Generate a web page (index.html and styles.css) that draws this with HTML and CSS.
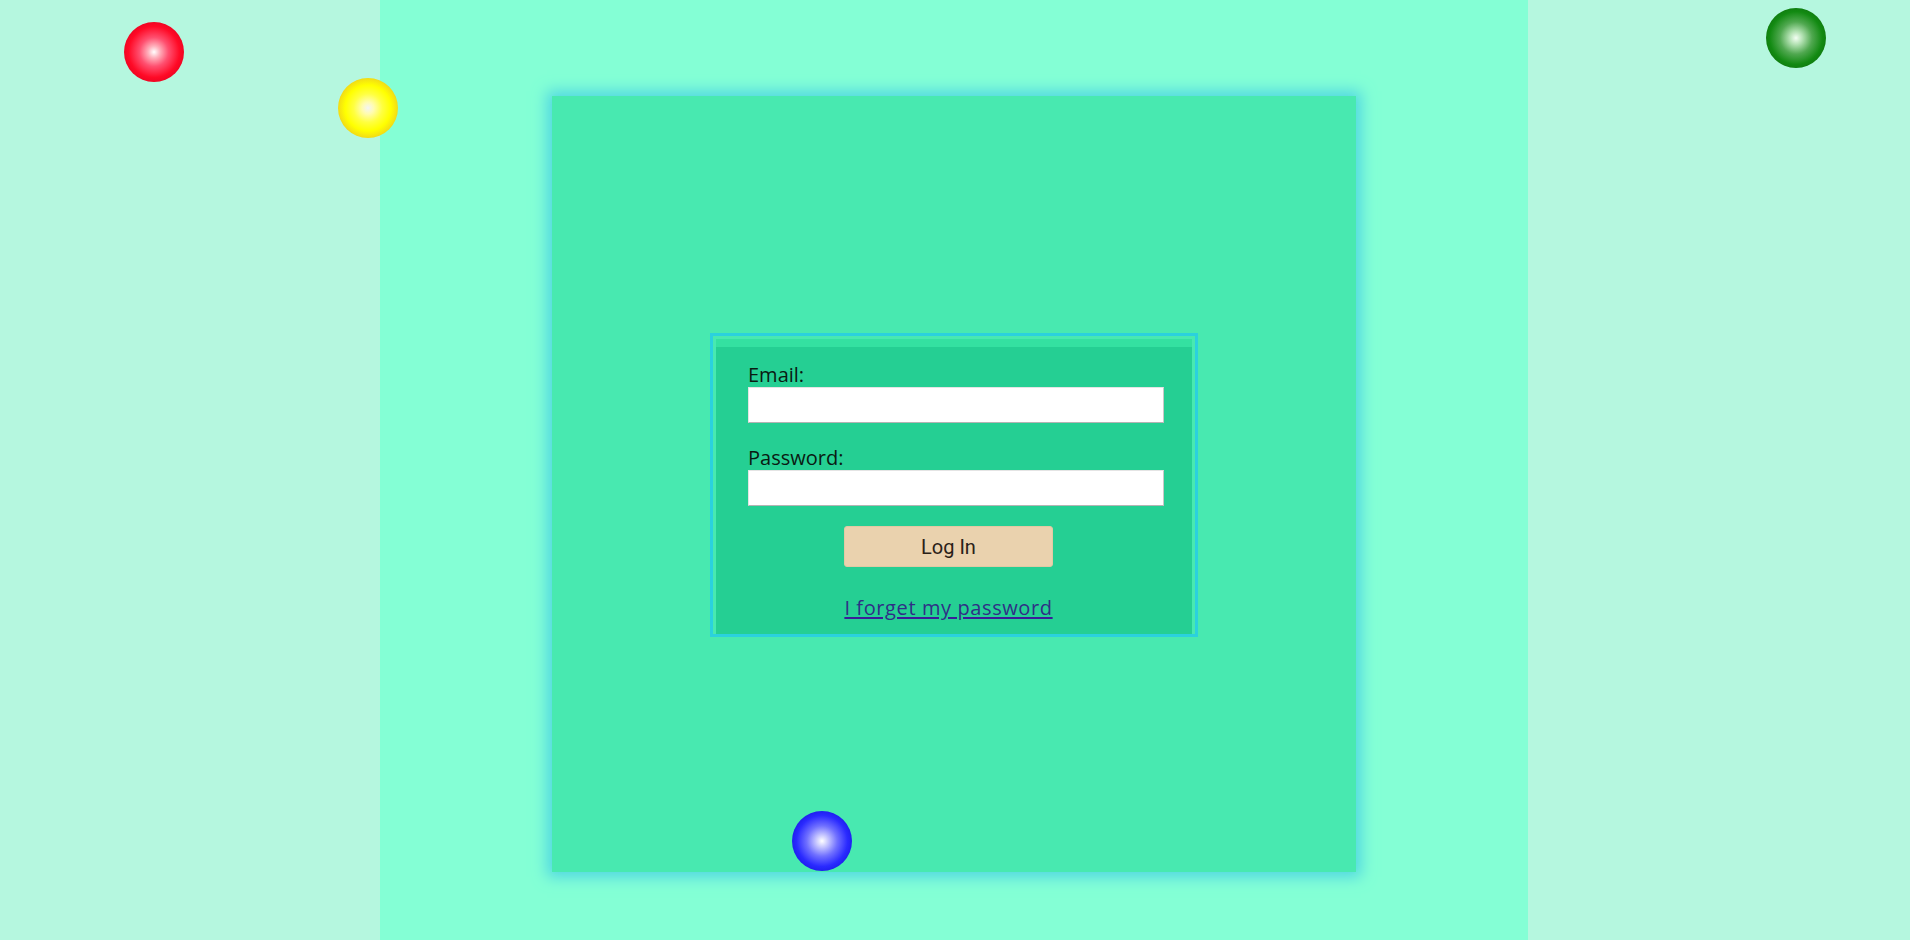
FILE: index.html
```html
<!DOCTYPE html>
<html lang="en">
<head>
<meta charset="utf-8">
<title>Log In</title>
<link rel="stylesheet" href="styles.css">
</head>
<body>
<div class="layout">
  <aside class="side side-left"></aside>
  <main class="center">
    <section class="card">
      <div class="form-frame">
        <form class="form">
          <label class="label" for="email">Email:</label>
          <input class="field" id="email" type="email">
          <label class="label label-pw" for="pw">Password:</label>
          <input class="field" id="pw" type="password">
          <div class="actions">
            <button class="btn" type="button">Log In</button>
            <a class="forgot" href="#">I forget my password</a>
          </div>
        </form>
      </div>
    </section>
  </main>
  <aside class="side side-right"></aside>
</div>
<span class="ball ball-red"></span>
<span class="ball ball-yellow"></span>
<span class="ball ball-green"></span>
<span class="ball ball-blue"></span>
</body>
</html>
```

FILE: styles.css
```css
* { box-sizing: border-box; }
html, body { margin: 0; padding: 0; }
body {
  width: 1910px;
  height: 940px;
  overflow: hidden;
  font-family: "Open Sans", "DejaVu Sans", sans-serif;
  position: relative;
}
.layout {
  display: flex;
  height: 940px;
}
.side {
  background: #b5f7df;
}
.side-left { width: 380px; }
.side-right { width: 382px; }
.center {
  width: 1148px;
  background: #84ffd5;
  display: flex;
  justify-content: center;
  align-items: flex-start;
  padding-top: 96px;
}
.card {
  width: 804px;
  height: 776px;
  background: #48e9b0;
  box-shadow: 0 0 14px 5px #4fd6e2;
  display: flex;
  justify-content: center;
  align-items: flex-start;
  padding-top: 237px;
}
.form-frame {
  width: 488px;
  border: 3px solid #2bd1dd;
  padding: 3px 3px 0 3px;
}
.form {
  background: #25cf93;
  border-top: 8px solid #34e1a1;
  padding: 16px 28px 14px 32px;
  display: flex;
  flex-direction: column;
  align-items: flex-start;
}
.label {
  font-size: 20px;
  line-height: 24px;
  color: #0a1a12;
}
.label-pw { margin-top: 23px; }
.field {
  width: 416px;
  height: 36px;
  margin: 0;
  background: #fff;
  border: 1px solid #e4e4e4;
  border-bottom-color: #b4b4b4;
  border-right-color: #c8c8c8;
}
.actions {
  width: 209px;
  margin-left: 96px;
  margin-top: 20px;
  display: flex;
  flex-direction: column;
  align-items: stretch;
}
.btn {
  height: 41px;
  background: #ead2ae;
  border: 1px solid #e2c9a3;
  border-radius: 3px;
  font-family: Roboto, "Liberation Sans", sans-serif;
  font-size: 20px;
  color: #2a2118;
  padding: 0;
}
.forgot {
  margin-top: 29px;
  text-align: center;
  font-size: 20px;
  letter-spacing: 0.6px;
  line-height: 24px;
  color: #2f2f86;
  text-decoration: underline;
  text-decoration-color: #3a1d99;
  text-underline-offset: 2px;
  white-space: nowrap;
}
.ball {
  position: absolute;
  width: 60px;
  height: 60px;
  border-radius: 50%;
}
.ball-red {
  left: 124px; top: 22px;
  background: radial-gradient(circle at center, #ffffff 0%, #ffb0bc 14%, #ff5070 34%, #ff0a26 60%, #e00020 82%, #c4001c 100%);
}
.ball-yellow {
  left: 338px; top: 78px;
  background: radial-gradient(circle at center, #f4f4f4 0%, #fffcb0 14%, #ffff40 34%, #ffff00 54%, #f0d818 72%, #d8b428 86%, #c8a038 100%);
}
.ball-green {
  left: 1766px; top: 8px;
  background: radial-gradient(circle at center, #f4fff4 0%, #b0e0b0 16%, #50a850 38%, #128a12 62%, #107010 82%, #2a6230 100%);
}
.ball-blue {
  left: 792px; top: 811px;
  background: radial-gradient(circle at center, #ffffff 0%, #c8c8ff 14%, #7070ff 36%, #2a2aff 60%, #1414e0 82%, #1010b8 100%);
}
```
